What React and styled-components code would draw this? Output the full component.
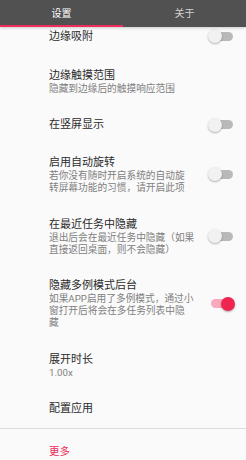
import styled, { createGlobalStyle } from 'styled-components'

const GlobalStyle = createGlobalStyle`
  html, body {
    margin: 0;
    padding: 0;
    background: #fafafa;
  }
  body {
    font-family: Roboto, "Noto Sans CJK SC", "Noto Sans", sans-serif;
    -webkit-font-smoothing: antialiased;
  }
`

const Page = styled.div`
  width: 246px;
  height: 460px;
  overflow: hidden;
  background: #fafafa;
  display: flex;
  flex-direction: column;
`

const TabBar = styled.div`
  height: 27px;
  flex: none;
  display: flex;
  background: #515151;
  box-shadow: 0 1px 3px rgba(0, 0, 0, 0.2);
  position: relative;
  z-index: 1;
`

const Tab = styled.div`
  flex: 1;
  display: flex;
  align-items: center;
  justify-content: center;
  color: ${p => (p.$active ? '#ffffff' : 'rgba(255,255,255,0.75)')};
  font-size: 10px;
  border-bottom: 2px solid ${p => (p.$active ? '#ef2d5c' : 'transparent')};
`

const List = styled.div`
  flex: 1;
  display: flex;
  flex-direction: column;
`

const Row = styled.div`
  display: flex;
  align-items: center;
  padding: ${p => p.$pad || '11.3px 0 11.3px 49px'};
  gap: 6px;
`

const Texts = styled.div`
  flex: 1;
  min-width: 0;
  display: flex;
  flex-direction: column;
`

const Title = styled.div`
  font-size: ${p => p.$size || '11px'};
  line-height: 15px;
  color: ${p => p.$color || '#2b2b2b'};
  white-space: nowrap;
`

const Summary = styled.div`
  font-size: 9.7px;
  line-height: 12px;
  color: #808080;
  white-space: nowrap;
`

const Track = styled.div`
  width: 22px;
  height: 9px;
  border-radius: 5px;
  background: ${p => (p.$on ? '#f9a9bd' : '#b9b9b9')};
  position: relative;
  flex: none;
  margin-right: 13px;
`

const Knob = styled.div`
  position: absolute;
  top: -2.5px;
  left: ${p => (p.$on ? '10px' : '-3px')};
  width: 14px;
  height: 14px;
  border-radius: 50%;
  background: ${p => (p.$on ? '#ef2550' : '#f1f1f1')};
  box-shadow: 0 1px 2px rgba(0, 0, 0, 0.3);
`

const Divider = styled.div`
  height: 1px;
  flex: none;
  background: #dcdcdc;
`

function Switch({ on }) {
  return (
    <Track $on={on}>
      <Knob $on={on} />
    </Track>
  )
}

const items = [
  { title: '边缘吸附', toggle: false, pad: '1.5px 0 13px 49px' },
  { title: '边缘触摸范围', summary: ['隐藏到边缘后的触摸响应范围'] },
  { title: '在竖屏显示', toggle: false },
  { title: '启用自动旋转', summary: ['若你没有随时开启系统的自动旋', '转屏幕功能的习惯，请开启此项'], toggle: false },
  { title: '在最近任务中隐藏', summary: ['退出后会在最近任务中隐藏（如果', '直接返回桌面，则不会隐藏）'], toggle: false },
  { title: '隐藏多例模式后台', summary: ['如果APP启用了多例模式，通过小', '窗打开后将会在多任务列表中隐', '藏'], toggle: true },
  { title: '展开时长', summary: ['1.00x'] },
  { title: '配置应用' },
]

export default function App() {
  return (
    <>
      <GlobalStyle />
      <Page>
        <TabBar>
          <Tab $active>设置</Tab>
          <Tab>关于</Tab>
        </TabBar>
        <List>
          {items.map(item => (
            <Row key={item.title} $pad={item.pad}>
              <Texts>
                <Title>{item.title}</Title>
                {item.summary && item.summary.map(s => <Summary key={s}>{s}</Summary>)}
              </Texts>
              {item.toggle !== undefined && <Switch on={item.toggle} />}
            </Row>
          ))}
          <Divider />
          <Row $pad="15px 0 10px 49px">
            <Texts>
              <Title $color="#ef2d5c" $size="10.5px">更多</Title>
            </Texts>
          </Row>
        </List>
      </Page>
    </>
  )
}
